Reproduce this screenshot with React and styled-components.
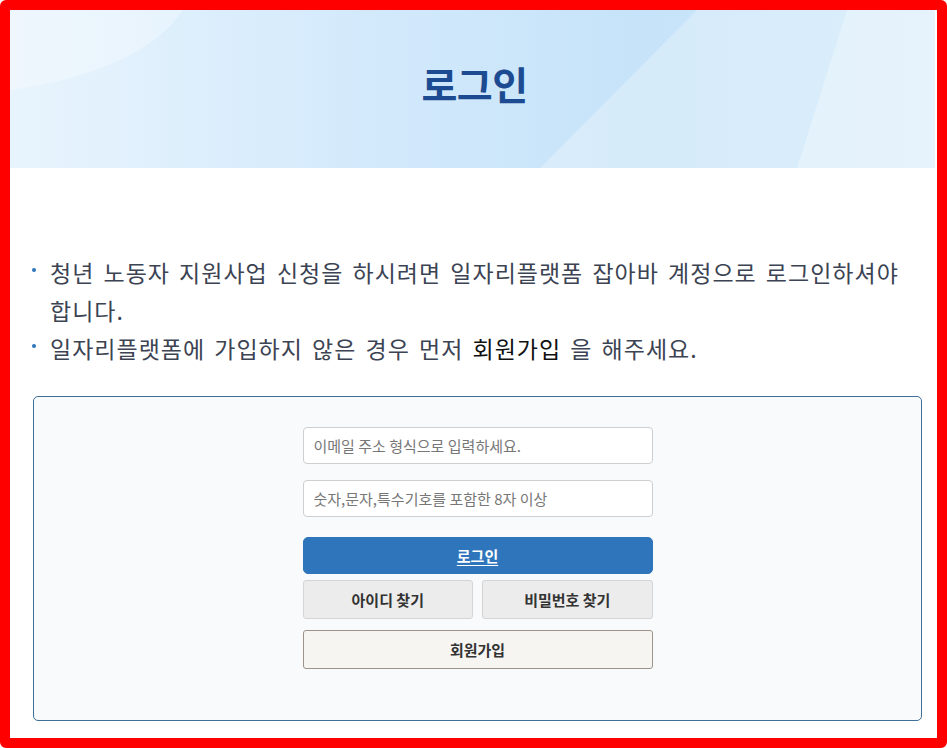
import React from 'react';
import styled, { createGlobalStyle } from 'styled-components';

const GlobalStyle = createGlobalStyle`
  html, body {
    margin: 0;
    padding: 0;
    background: #ffffff;
  }
  * {
    box-sizing: border-box;
  }
  body {
    font-family: "Noto Sans CJK KR", "Noto Sans", sans-serif;
  }
`;

// 바깥 빨간 테두리
const Frame = styled.div`
  width: 947px;
  height: 748px;
  border: 10px solid #ff0000;
  border-radius: 6px;
  background: #ffffff;
  overflow: hidden;
`;

const Banner = styled.section`
  position: relative;
  height: 158px;
  margin-right: 2px;
  display: flex;
  align-items: center;
  justify-content: center;
  overflow: hidden;
`;

const BannerArt = styled.svg`
  position: absolute;
  inset: 0;
  width: 100%;
  height: 100%;
`;

const Title = styled.h1`
  position: relative;
  margin: 0 0 12px 4px;
  font-size: 39px;
  font-weight: 700;
  letter-spacing: -0.5px;
  color: #1c4b91;
`;

const NoticeList = styled.ul`
  list-style: none;
  margin: 85px 30px 29px 0;
  padding: 0;
`;

const NoticeItem = styled.li`
  display: flex;
  align-items: flex-start;
  font-size: 23px;
  line-height: 38px;
  color: #3c4352;
  letter-spacing: 1px;
  word-spacing: 3px;
  word-break: keep-all;
`;

const Dot = styled.span`
  flex: none;
  width: 4px;
  height: 4px;
  margin: 15px 14px 0 22px;
  border-radius: 50%;
  background: #2e75bb;
`;

const Strong = styled.span`
  color: #111111;
`;

const LoginBox = styled.div`
  height: 325px;
  margin: 0 15px 0 23px;
  padding-top: 30px;
  border: 1px solid #3f6f97;
  border-radius: 5px;
  background: #f8fafc;
  display: flex;
  justify-content: center;
`;

const Form = styled.div`
  width: 350px;
  display: flex;
  flex-direction: column;
`;

const Input = styled.input`
  width: 100%;
  height: 37px;
  padding: 0 10px;
  margin-bottom: ${(props) => props.$gap || 0}px;
  border: 1px solid #cfcfcf;
  border-radius: 4px;
  background: #ffffff;
  font-family: inherit;
  font-size: 15px;
  color: #333;
  outline: none;

  &::placeholder {
    color: #777777;
  }
`;

const Button = styled.button`
  height: ${(props) => props.$height || 39}px;
  width: 100%;
  border-radius: ${(props) => (props.$primary ? 5 : 3)}px;
  border: 1px solid ${(props) => props.$border};
  background: ${(props) => props.$bg};
  color: ${(props) => (props.$primary ? '#ffffff' : '#333333')};
  text-decoration: ${(props) => (props.$primary ? 'underline' : 'none')};
  text-underline-offset: 3px;
  font-family: inherit;
  font-size: 15px;
  font-weight: 700;
  cursor: pointer;
`;

const ButtonRow = styled.div`
  display: flex;
  gap: 9px;
  margin: 6px 0 11px;
`;

function Header() {
  return (
    <Banner>
      <BannerArt viewBox="0 0 925 158" preserveAspectRatio="none">
        <defs>
          <linearGradient id="bannerBg" x1="0" y1="0" x2="1" y2="0">
            <stop offset="0" stopColor="#e8f4fd" />
            <stop offset="0.4" stopColor="#d2e9fb" />
            <stop offset="0.68" stopColor="#c6e3f9" />
            <stop offset="1" stopColor="#cde7fa" />
          </linearGradient>
        </defs>
        <rect x="0" y="0" width="925" height="158" fill="url(#bannerBg)" />
        <path d="M0,80 Q130,62 173,0 L0,0 Z" fill="#ffffff" opacity="0.3" />
        <polygon points="687,0 925,0 925,158 530,158" fill="#ffffff" opacity="0.28" />
        <polygon points="837,0 925,0 925,158 787,158" fill="#ffffff" opacity="0.3" />
      </BannerArt>
      <Title>로그인</Title>
    </Banner>
  );
}

function App() {
  return (
    <>
      <GlobalStyle />
      <Frame>
        <Header />
        <NoticeList>
          <NoticeItem>
            <Dot />
            <span>청년 노동자 지원사업 신청을 하시려면 일자리플랫폼 잡아바 계정으로 로그인하셔야 합니다.</span>
          </NoticeItem>
          <NoticeItem>
            <Dot />
            <span>
              일자리플랫폼에 가입하지 않은 경우 먼저 <Strong>회원가입</Strong> 을 해주세요.
            </span>
          </NoticeItem>
        </NoticeList>
        <LoginBox>
          <Form>
            <Input $gap={16} type="text" placeholder="이메일 주소 형식으로 입력하세요." />
            <Input $gap={20} type="password" placeholder="숫자,문자,특수기호를 포함한 8자 이상" />
            <Button $primary $height={37} $bg="#2e75bb" $border="#2e75bb">로그인</Button>
            <ButtonRow>
              <Button $bg="#ececec" $border="#d4d4d4">아이디 찾기</Button>
              <Button $bg="#ececec" $border="#d4d4d4">비밀번호 찾기</Button>
            </ButtonRow>
            <Button $bg="#f7f5f2" $border="#9d928a">회원가입</Button>
          </Form>
        </LoginBox>
      </Frame>
    </>
  );
}

export default App;
